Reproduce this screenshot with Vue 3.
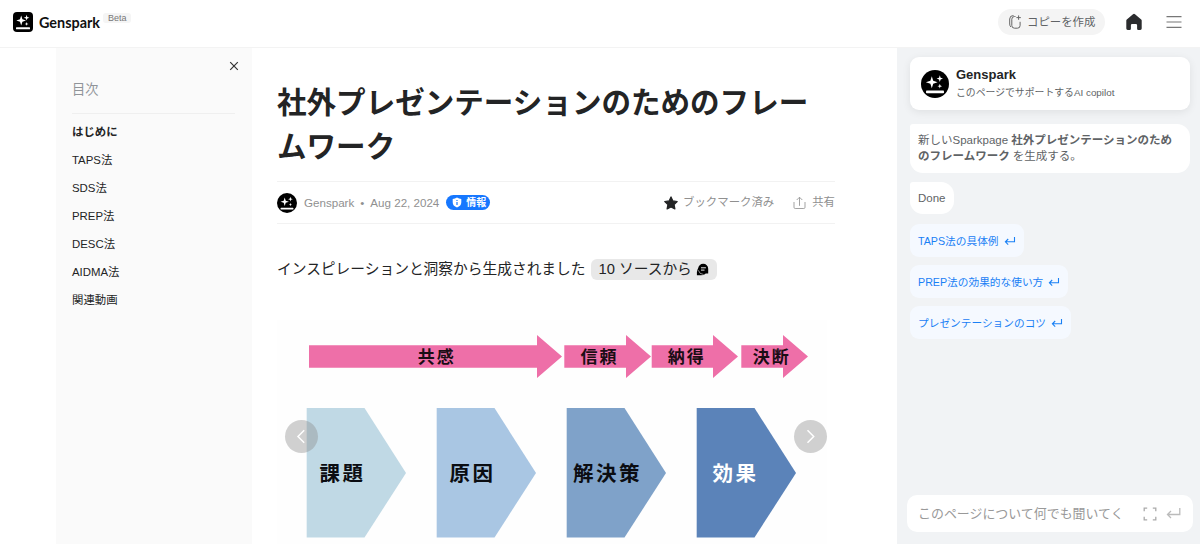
<script setup>
import { ref } from 'vue';

const tocItems = ref([
  'はじめに',
  'TAPS法',
  'SDS法',
  'PREP法',
  'DESC法',
  'AIDMA法',
  '関連動画'
]);
const activeItem = ref('はじめに');
const showToc = ref(true);

const suggestions = [
  'TAPS法の具体例',
  'PREP法の効果的な使い方',
  'プレゼンテーションのコツ'
];

const question = ref('');

// x: left edge, neck: where the head begins, tip: right point
const feelings = [
  { label: '共感', x: 32, neck: 260, tip: 285, textX: 140.7 },
  { label: '信頼', x: 287.3, neck: 349, tip: 374, textX: 303.5 },
  { label: '納得', x: 374.7, neck: 436, tip: 461, textX: 390.7 },
  { label: '決断', x: 464.3, neck: 506, tip: 531, textX: 475.7 }
];

const steps = [
  { label: '課題', x: 30, textX: 42.5, fill: '#c0d9e5', color: '#0b0d12' },
  { label: '原因', x: 160, textX: 172.5, fill: '#a9c6e3', color: '#0b0d12' },
  { label: '解決策', x: 290, textX: 296, fill: '#7fa2c9', color: '#0b0d12' },
  { label: '効果', x: 420, textX: 435.5, fill: '#5b83b9', color: '#fff' }
];

function arrowPoints(a) {
  return `${a.x},25.3 ${a.neck},25.3 ${a.neck},15 ${a.tip},36.5 ${a.neck},58 ${a.neck},47.7 ${a.x},47.7`;
}

function stepPoints(s) {
  return `${s.x - 0.3},88 ${s.x + 57.5},88 ${s.x + 99},153 ${s.x + 57.5},217.5 ${s.x - 0.3},217.5`;
}
</script>

<template>
  <div class="page">
    <header class="header">
      <div class="brand">
        <svg class="brand-logo" viewBox="0 0 20 20">
          <rect width="20" height="20" rx="4" fill="#000" />
          <path d="M8.2 3.4 9.4 7.2 13 8.5 9.4 9.8 8.2 13.5 7 9.8 3.3 8.5 7 7.2Z" fill="#fff" />
          <path d="M13.6 2.8 14.3 5 16.4 5.7 14.3 6.4 13.6 8.6 12.9 6.4 10.8 5.7 12.9 5Z" fill="#fff" />
          <path d="M13.6 10 14.1 11.4 15.5 11.9 14.1 12.4 13.6 13.8 13.1 12.4 11.7 11.9 13.1 11.4Z" fill="#fff" />
          <rect x="3" y="15.3" width="14" height="1.9" rx=".5" fill="#fff" />
        </svg>
        <span class="brand-name">Genspark</span>
        <span class="beta">Beta</span>
      </div>
      <div class="header-actions">
        <button class="copy-btn">
          <svg class="copy-icon" viewBox="0 0 14 16" fill="none" stroke="#666" stroke-width="1">
            <path d="M7.500 2.500H6.500Q3.800 2.500 3.800 5.200v6.300q0 2.700 2.700 2.700h2.900q2.700 0 2.700-2.700V7.800" />
            <path d="M5.500 1.500Q1.700 1.500 1.700 5v5q0 2 1.300 3M10.600 1.400v4.400M8.400 3.600h4.400" />
          </svg>
          <span>コピーを作成</span>
        </button>
        <svg class="home-icon" viewBox="0 0 16 18">
          <path d="M7 1.200q1-.8 2 0l6.200 5.300q.5.4.5 1.100v8q0 1.400-1.400 1.400h-2q-1.200 0-1.200-1.200v-3.600q0-1.200-1.200-1.200H6.100q-1.200 0-1.200 1.200v3.600Q4.900 17 3.700 17h-2Q.3 17 .3 15.600v-8q0-.7.5-1.100Z" fill="#2b2c2e" />
        </svg>
        <svg class="menu-icon" viewBox="0 0 16 14" stroke="#777" stroke-width="1.1">
          <path d="M.5 1.600h15M.5 7h15M.5 12.400h15" />
        </svg>
      </div>
    </header>

    <div class="body">
      <aside v-if="showToc" class="toc">
        <button class="toc-close" @click="showToc = false">
          <svg viewBox="0 0 10 10" fill="none" stroke="#333" stroke-width="1.2">
            <path d="M1.200 1.200 8.800 8.800M8.800 1.200 1.200 8.800" />
          </svg>
        </button>
        <div class="toc-title">目次</div>
        <ul class="toc-list">
          <li
            v-for="item in tocItems"
            :key="item"
            :class="{ active: item === activeItem }"
            @click="activeItem = item"
          >{{ item }}</li>
        </ul>
      </aside>

      <main class="article">
        <h1 class="title">社外プレゼンテーションのためのフレームワーク</h1>

        <div class="meta">
          <svg class="avatar" viewBox="0 0 28 28">
            <circle cx="14" cy="14" r="14" fill="#000" />
            <path d="M10.800 6.300 12.200 10.800 16.600 12.300 12.200 13.800 10.800 18.300 9.400 13.800 4.900 12.300 9.400 10.800Z" fill="#fff" />
            <path d="M18.800 5.300 19.600 7.800 22 8.600 19.600 9.400 18.800 11.900 18 9.400 15.600 8.600 18 7.800Z" fill="#fff" />
            <path d="M18.800 13.800 19.400 15.600 21.100 16.200 19.400 16.800 18.800 18.500 18.200 16.800 16.500 16.200 18.200 15.600Z" fill="#fff" />
            <rect x="5" y="20.600" width="18" height="2.600" rx=".8" fill="#fff" />
          </svg>
          <span class="author">Genspark</span>
          <span class="dot">•</span>
          <span>Aug 22, 2024</span>
          <span class="tag">
            <svg viewBox="0 0 10 11">
              <path d="M5 .5Q7 1.900 9.300 2v3.300Q9.300 9 5 10.600.7 9 .7 5.300V2Q3 1.900 5 .5Z" fill="#fff" />
              <path d="M5 4.900v3M5 2.900v1.100" stroke="#1677ff" stroke-width="1.200" />
            </svg>
            <span>情報</span>
          </span>
          <div class="meta-actions">
            <span class="action">
              <svg class="star" viewBox="0 0 14 14">
                <path d="m7 .9 1.900 4 4.300.6-3.100 3.100.8 4.300L7 10.900l-3.900 2 .8-4.300L.8 5.500l4.300-.6Z" fill="#232425" stroke="#232425" stroke-width="1.200" stroke-linejoin="round" />
              </svg>
              <span>ブックマーク済み</span>
            </span>
            <span class="action share">
              <svg viewBox="0 0 13 14" fill="none" stroke="#999" stroke-width=".9">
                <path d="M1 6v5.300q0 1.200 1.200 1.200h8.600q1.200 0 1.200-1.200V6M6.500 9.800V1.300M3.700 4 6.500 1.200 9.300 4" />
              </svg>
              <span>共有</span>
            </span>
          </div>
        </div>

        <p class="intro">
          <span>インスピレーションと洞察から生成されました</span>
          <span class="sources">
            <span>10 ソースから</span>
            <svg viewBox="0 0 13 13">
              <path d="M3.200 4.200Q.8 6 .9 9v3.300h3.600q3.500.1 5.200-1.900Z" fill="#000" />
              <path d="M7.200.7a5 5 0 0 1 5 5v4.900h-5a5 4.950 0 0 1 0-9.900Z" fill="#000" />
              <path d="M5 4.800h4.900M5 7.100h3.500" stroke="#e8e8e8" stroke-width="1" />
              <path d="M2.400 7.300q.8 3.900 5.200 4.200" fill="none" stroke="#e8e8e8" stroke-width=".6" />
            </svg>
          </span>
        </p>

        <div class="carousel">
          <svg class="slide" viewBox="0 0 550 224">
            <g class="feeling" v-for="a in feelings" :key="a.label">
              <polygon :points="arrowPoints(a)" fill="#ee6fa8" />
              <text :x="a.textX" y="42.500">{{ a.label }}</text>
            </g>
            <g class="step" v-for="s in steps" :key="s.label">
              <polygon :points="stepPoints(s)" :fill="s.fill" />
              <text :x="s.textX" y="161" :fill="s.color">{{ s.label }}</text>
            </g>
          </svg>
          <button class="nav prev">
            <svg viewBox="0 0 33 33"><path d="M19.200 10.300 13 16.500l6.200 6.200" /></svg>
          </button>
          <button class="nav next">
            <svg viewBox="0 0 33 33"><path d="m13.500 10.300 6.200 6.200-6.200 6.200" /></svg>
          </button>
        </div>
      </main>

      <aside class="copilot">
        <div class="copilot-card">
          <svg class="copilot-avatar" viewBox="0 0 28 28">
            <circle cx="14" cy="14" r="14" fill="#000" />
            <path d="M10.800 6.300 12.200 10.800 16.600 12.300 12.200 13.800 10.800 18.300 9.400 13.800 4.900 12.300 9.400 10.800Z" fill="#fff" />
            <path d="M18.800 5.300 19.600 7.800 22 8.600 19.600 9.400 18.800 11.900 18 9.400 15.600 8.600 18 7.800Z" fill="#fff" />
            <path d="M18.800 13.800 19.400 15.600 21.100 16.200 19.400 16.800 18.800 18.500 18.200 16.800 16.500 16.200 18.200 15.600Z" fill="#fff" />
            <rect x="5" y="20.600" width="18" height="2.600" rx=".8" fill="#fff" />
          </svg>
          <div>
            <div class="copilot-name">Genspark</div>
            <div class="copilot-desc">このページでサポートするAI copilot</div>
          </div>
        </div>

        <div class="bubble wide">
          新しいSparkpage <b>社外プレゼンテーションのためのフレームワーク</b> を生成する。
        </div>
        <div class="bubble">Done</div>

        <div class="chips">
          <button v-for="s in suggestions" :key="s" class="chip" @click="question = s">
            <span>{{ s }}</span>
            <svg viewBox="0 0 12 10" fill="none" stroke="currentColor" stroke-width="1.1">
              <path d="M10.500 1v4.800H1.500M4.200 3 1.400 5.800l2.800 2.800" />
            </svg>
          </button>
        </div>

        <div class="ask">
          <input v-model="question" type="text" placeholder="このページについて何でも聞いてください" />
          <svg class="expand" viewBox="0 0 14 14" fill="none" stroke="#aaa" stroke-width="1.300">
            <path d="M1.200 4.200v-3h3M9.800 1.200h3v3M12.800 9.800v3h-3M4.200 12.800h-3v-3" />
          </svg>
          <svg class="enter" viewBox="0 0 15 13" fill="none" stroke="#bbb" stroke-width="1.300">
            <path d="M13.800 1v6.500H1.500M5 4 1.500 7.500 5 11" />
          </svg>
        </div>
      </aside>
    </div>
  </div>
</template>

<style>
body {
  overflow: hidden;
}
</style>

<style scoped>
.page {
  height: 544px;
  overflow: hidden;
  background-color: #fff;
  color: #232425;
  font-family: "Liberation Sans", "Noto Sans CJK JP", sans-serif;
}

.page *,
.page {
  box-sizing: border-box;
}

svg {
  display: block;
  flex-shrink: 0;
}

button {
  border: none;
  padding: 0;
  font-family: inherit;
  cursor: pointer;
}

.header {
  display: flex;
  justify-content: space-between;
  align-items: center;
  height: 48px;
  padding: 0 18px 3px 13px;
  border-bottom: 1px solid #f3f3f3;
}

.brand {
  display: flex;
  align-items: center;
}

.brand-logo {
  width: 20px;
  height: 20px;
}

.brand-name {
  margin-left: 6px;
  width: 61px;
  padding-top: 1px;
  font-family: Lato, sans-serif;
  font-size: 14.4px;
  font-weight: 700;
  line-height: 20px;
  color: #111;
}

.beta {
  align-self: flex-start;
  margin-top: 1px;
  margin-left: 3px;
  padding: 0 4px 0 5px;
  font-size: 9px;
  line-height: 10px;
  border-radius: 3px;
  color: #777;
  background-color: #f5f5f5;
}

.header-actions {
  display: flex;
  align-items: center;
}

.copy-btn {
  display: flex;
  align-items: center;
  gap: 5px;
  width: 107px;
  height: 26px;
  padding-left: 10px;
  border-radius: 13px;
  font-size: 11.4px;
  line-height: 16px;
  color: #606366;
  background-color: #f4f4f4;
}

.copy-btn span {
  padding-bottom: 1px;
}

.copy-icon {
  width: 14px;
  height: 16px;
}

.home-icon {
  width: 16px;
  height: 18px;
  margin-left: 21px;
}

.menu-icon {
  width: 16px;
  height: 14px;
  margin-left: 24px;
}

.body {
  display: flex;
  height: 496px;
  padding-left: 56px;
}

.toc {
  display: flex;
  flex-direction: column;
  width: 196px;
  padding: 13px 17px 0 16px;
  background-color: #fafafa;
}

.toc-close {
  align-self: flex-end;
  width: 10px;
  height: 10px;
  margin-right: -4px;
  background: none;
}

.toc-title {
  height: 43px;
  padding-top: 9px;
  font-size: 13.2px;
  line-height: 20px;
  color: #909499;
  border-bottom: 1px solid #efefef;
}

.toc-list {
  margin: 4px 0 0;
  padding: 0;
  list-style: none;
}

.toc-list li {
  height: 28px;
  font-size: 11.4px;
  line-height: 28px;
  cursor: pointer;
}

.toc-list li.active {
  font-weight: 700;
}

.article {
  width: 645px;
  padding: 33px 62px 0 25px;
}

.title {
  margin: 0;
  font-size: 29.55px;
  font-weight: 700;
  line-height: 44px;
}

.meta {
  display: flex;
  align-items: center;
  height: 43px;
  margin-top: 12px;
  border-top: 1px solid #f2f2f2;
  border-bottom: 1px solid #f2f2f2;
  font-size: 11.6px;
  color: #909090;
  white-space: nowrap;
}

.avatar {
  width: 20px;
  height: 20px;
}

.author {
  margin-left: 7px;
}

.dot {
  margin: 0 6px;
}

.tag {
  display: flex;
  align-items: center;
  gap: 4px;
  height: 15px;
  margin-left: 7px;
  padding: 0 4px 0 6px;
  border-radius: 8px;
  font-size: 10px;
  font-weight: 700;
  line-height: 15px;
  color: #fff;
  background-color: #1677ff;
}

.tag svg {
  width: 10px;
  height: 11px;
}

.meta-actions {
  display: flex;
  gap: 19px;
  margin-left: auto;
}

.action {
  display: flex;
  align-items: center;
  gap: 5px;
  font-size: 11.4px;
  line-height: 16px;
}

.action span {
  padding-bottom: 1px;
}

.star {
  width: 14px;
  height: 14px;
}

.share {
  gap: 6px;
}

.share svg {
  width: 13px;
  height: 14px;
}

.intro {
  display: flex;
  align-items: center;
  gap: 5px;
  height: 22px;
  margin: 34px 0 0;
  font-size: 14.72px;
  line-height: 22px;
  white-space: nowrap;
}

.sources {
  display: flex;
  align-items: center;
  gap: 4px;
  height: 21px;
  padding: 0 8px;
  border-radius: 6px;
  background-color: #e8e8e8;
}

.sources svg {
  width: 13px;
  height: 13px;
}

.carousel {
  position: relative;
  width: 558px;
  height: 224px;
  margin-top: 40px;
}

.slide {
  width: 550px;
  height: 224px;
  background-color: #fefefe;
  font-family: "Noto Sans CJK JP", sans-serif;
  font-weight: 700;
}

.feeling text {
  font-size: 17px;
  letter-spacing: 2px;
  fill: #1b0d15;
}

.step text {
  font-size: 20.5px;
  letter-spacing: 2.5px;
}

/* arrows float over the slide */
.nav {
  position: absolute;
  top: 100px;
  width: 33px;
  height: 33px;
  border-radius: 50%;
  background-color: rgba(140, 140, 140, 0.4);
}

.nav path {
  fill: none;
  stroke: #fff;
  stroke-width: 1.5;
}

.prev {
  left: 8px;
}

.next {
  left: 517px;
}

.copilot {
  display: flex;
  flex-direction: column;
  align-items: flex-start;
  width: 303px;
  padding: 9px 10px 12px 13px;
  background-color: #f1f3f5;
}

.copilot-card {
  display: flex;
  align-items: center;
  gap: 7px;
  width: 280px;
  height: 53px;
  padding-left: 11px;
  border-radius: 9px;
  background-color: #fff;
  box-shadow: 0 2px 8px rgba(0, 0, 0, 0.08);
}

.copilot-avatar {
  width: 28px;
  height: 28px;
}

.copilot-name {
  font-size: 13px;
  font-weight: 700;
  line-height: 17px;
}

.copilot-desc {
  padding-top: 2px;
  font-size: 9.85px;
  line-height: 16px;
  color: #606366;
}

.bubble {
  margin-top: 9px;
  padding: 8px;
  border-radius: 3px 13px 13px 13px;
  font-size: 11.5px;
  line-height: 16.4px;
  color: #606366;
  background-color: #fff;
}

.bubble.wide {
  width: 280px;
  margin-top: 14px;
}

.chips {
  display: flex;
  flex-direction: column;
  align-items: flex-start;
  gap: 8px;
  margin-top: 10px;
}

.chip {
  display: flex;
  align-items: center;
  gap: 5px;
  height: 33px;
  padding: 0 8px;
  border-radius: 9px;
  font-size: 10.7px;
  color: #1980f5;
  background-color: #f5f9ff;
}

.chip svg {
  width: 12px;
  height: 10px;
}

.ask {
  display: flex;
  align-items: center;
  width: 286px;
  height: 37px;
  margin-top: auto;
  margin-left: -3px;
  padding: 0 12px 0 11px;
  border-radius: 10px;
  background-color: #fff;
}

.ask input {
  width: 206px;
  padding: 0;
  border: none;
  outline: none;
  font-family: inherit;
  font-size: 12.95px;
  background: none;
}

.ask input::placeholder {
  color: #999;
}

.expand {
  width: 14px;
  height: 14px;
  margin-left: 19px;
}

.enter {
  width: 15px;
  height: 13px;
  margin-left: 9px;
}
</style>
